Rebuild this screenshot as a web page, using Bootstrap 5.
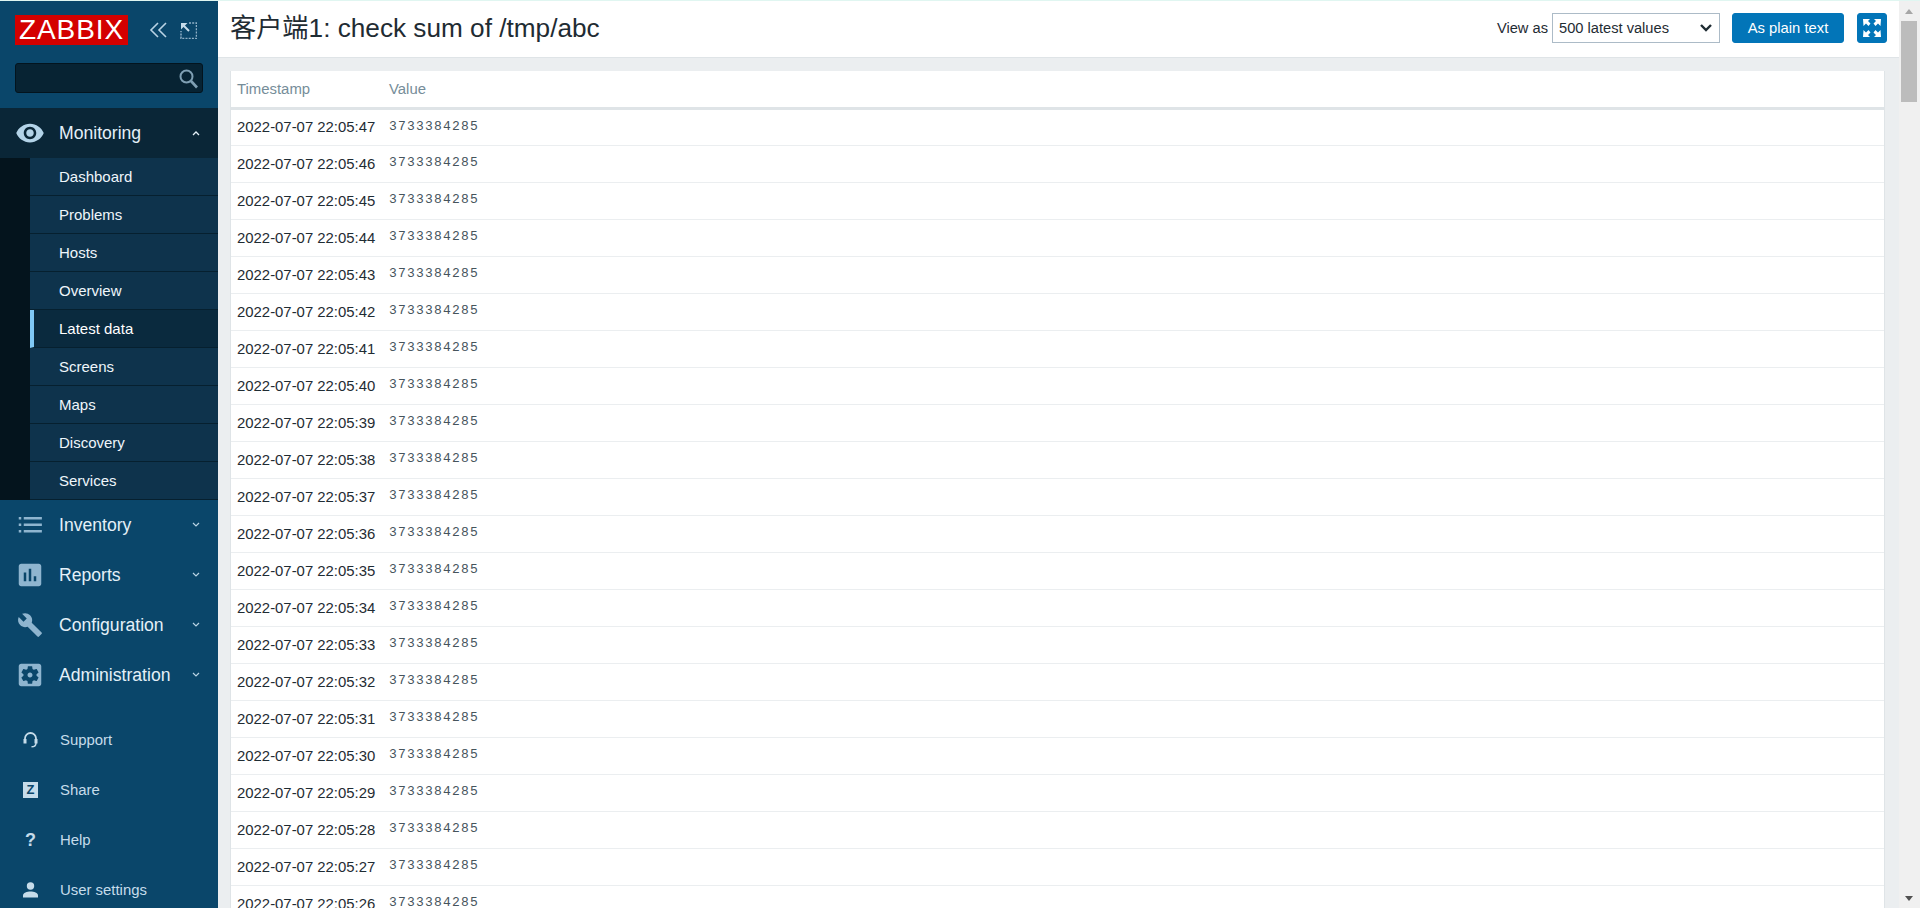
<!DOCTYPE html>
<html lang="en">
<head>
  <meta charset="UTF-8" />
  <meta name="viewport" content="width=device-width, initial-scale=1.0"/>
  <title>客户端1: check sum of /tmp/abc</title>
  <link href="https://cdn.jsdelivr.net/npm/bootstrap@5.3.0/dist/css/bootstrap.min.css" rel="stylesheet">
  <style>
    html, body { height: 100%; overflow: hidden; }
    body { font-family: "Liberation Sans", "Noto Sans CJK SC", sans-serif; font-size: 14.67px; color: #1f2c33; background: #ebeef0; }
    .app-shell { height: 100vh; border-top: 1px solid #e0f6f1; }
    /* sidebar */
    .side { width: 218px; flex: none; background: #0a466a; overflow: hidden; }
    .side > * { flex-shrink: 0; }
    .side-top { height: 107px; padding: 14px 15px 0; }
    .logo { width: 113px; height: 30px; background: #d40000; color: #fff; font-size: 28px; line-height: 30px; text-align: center; letter-spacing: .9px; }
    .side-btns { margin-left: 21px; gap: 12px; }
    .side-btns svg { display: block; }
    .side-search { height: 30px; width: 188px; margin-top: 18px; background: #072333; border: 1px solid #03141e; border-radius: 3px; }
    .side-search svg { position: absolute; right: 4px; top: 5px; }
    .mon-head { background: #0a2637; color: #f4f9fc; }
    .menu-row { height: 50px; font-size: 17.6px; color: #e4f0f8; padding-left: 15px; }
    .menu-row .mi { width: 30px; height: 30px; flex: none; margin-right: 14px; }
    .menu-row .mi-sm { width: 26px; height: 26px; margin-left: 2px; margin-right: 16px; }
    .menu-row .chev { margin-left: auto; margin-right: 18px; }
    .sub-wrap { padding-left: 30px; background: #04141d; }
    .sub-item { height: 38px; padding-left: 29px; font-size: 15px; background: #0e334c; border-bottom: 1px solid #06202f; color: #eef6fb; line-height: 38px; }
    .sub-item.on { background: #0a2a3e; border-left: 4px solid #7fc8f5; padding-left: 25px; color: #fff; }
    .foot-list { margin-top: 15px; }
    .foot-row { height: 50px; color: #c6dcea; padding-left: 23px; font-size: 14.9px; }
    .foot-row .fi { width: 15px; height: 16px; flex: none; margin-right: 22px; }
    .fi-z { background: #c6dcea; color: #0a466a; font-weight: 700; font-size: 13px; line-height: 16px; text-align: center; }
    .fi-q { color: #c6dcea; font-weight: 700; font-size: 18px; line-height: 16px; text-align: center; }
    /* main */
    .main-col { min-width: 0; }
    .page-head { height: 57px; flex: none; background: #fff; border-bottom: 1px solid #dfe4e7; padding: 0 12px 2px 12px; }
    .page-head h1 { font-size: 26.2px; font-weight: 400; margin: 2px 0 0; color: #1f2c33; }
    .view-sel { width: 168px; height: 30px; padding: 0 24px 0 6px; font-size: 14.67px; color: #1f2c33; border: 1px solid #acbbc7; border-radius: 0; background-position: right 6px center; background-size: 14px 10px; background-image: url("data:image/svg+xml,%3csvg xmlns='http://www.w3.org/2000/svg' viewBox='0 0 14 10'%3e%3cpath fill='none' stroke='%231f2c33' stroke-width='2.4' d='M2 2l5 5 5-5'/%3e%3c/svg%3e"); }
    .btn-plain { height: 30px; width: 112px; padding: 0; background: #0275b8; border-color: #0275b8; color: #fff; font-size: 14.8px; border-radius: 3px; margin-left: 12px; }
    .btn-full { height: 30px; width: 30px; padding: 0; background: #0275b8; border-color: #0275b8; border-radius: 3px; margin-left: 13px; }
    .content-area { padding: 13px 14px 0 12px; min-height: 0; overflow: hidden; }
    .data-box { background: #fff; border: 1px solid #dfe4e7; border-width: 0 1px; }
    .data-tbl { margin: 0; table-layout: fixed; font-size: 14.9px; --bs-table-color: #1f2c33; }
    .data-tbl th { height: 37px; padding: 0 6px; font-weight: 400; color: #768d99; border-bottom: 3px solid #dfe4e7; vertical-align: middle; }
    .data-tbl td { height: 37px; padding: 1px 6px 0; border-bottom: 1px solid #ebeef0; vertical-align: middle; }
    .data-tbl .ts-col { width: 152px; }
    .data-tbl td.val-cell { font-family: "Liberation Mono", monospace; font-size: 13px; letter-spacing: 1.2px; color: #46545c; padding: 0 6px 1px; }
    /* fake scrollbar of the window */
    .win-scroll { width: 21px; flex: none; background: #f0f0f0; }
    .win-thumb { position: absolute; left: 2px; right: 3px; top: 20px; height: 81px; background: #bcbcbc; }
    .arr-up, .arr-down { position: absolute; left: 6px; width: 0; height: 0; border-left: 4.5px solid transparent; border-right: 4.5px solid transparent; }
    .arr-up { top: 8px; border-bottom: 5px solid #a6a6a6; }
    .arr-down { bottom: 7px; border-top: 5px solid #505050; }
  </style>
</head>
<body>
  <div class="app-shell d-flex">
    <aside class="side d-flex flex-column">
      <div class="side-top">
        <div class="d-flex align-items-center">
          <div class="logo">ZABBIX</div>
          <div class="side-btns d-flex align-items-center">
            <svg width="19" height="16" viewBox="0 0 19 16" fill="none" stroke="#b9d3e4" stroke-width="1.6"><path d="M9 1 2 8l7 7M17 1l-7 7 7 7"/></svg>
            <svg width="17" height="17" viewBox="0 0 17 17" fill="none" stroke="#8fb0c6" stroke-width="1.5"><path d="M9 1h7.500v15.500H1V9" stroke-dasharray="2 1.200"/><path d="M1 1h6.500L1 7.500z" fill="#c6dcea" stroke="none"/><path d="m3 3 6 6" stroke="#c6dcea" stroke-width="2"/></svg>
          </div>
        </div>
        <div class="side-search position-relative">
          <svg width="19" height="20" viewBox="0 0 19 20" fill="none" stroke="#7f9fb3" stroke-width="2"><circle cx="7.500" cy="7.500" r="6"/><path d="m12 12 6 6.500" stroke-width="2.600"/></svg>
        </div>
      </div>

      <div class="menu-row mon-head d-flex align-items-center">
        <svg class="mi" viewBox="0 0 24 24" fill="#b3d3e8"><path d="M12 4.500C7 4.500 2.730 7.610 1 12c1.730 4.390 6 7.500 11 7.500s9.270-3.110 11-7.500c-1.730-4.390-6-7.500-11-7.500zM12 17c-2.760 0-5-2.240-5-5s2.240-5 5-5 5 2.240 5 5-2.240 5-5 5zm0-8c-1.660 0-3 1.340-3 3s1.340 3 3 3 3-1.340 3-3-1.340-3-3-3z"/></svg>
        <span>Monitoring</span>
        <svg class="chev" width="8" height="6" viewBox="0 0 8 6" fill="none" stroke="#e4f0f8" stroke-width="1.300"><path d="m1 5 3-3 3 3"/></svg>
      </div>
      <div class="sub-wrap">
        <div class="sub-item">Dashboard</div>
        <div class="sub-item">Problems</div>
        <div class="sub-item">Hosts</div>
        <div class="sub-item">Overview</div>
        <div class="sub-item on">Latest data</div>
        <div class="sub-item">Screens</div>
        <div class="sub-item">Maps</div>
        <div class="sub-item">Discovery</div>
        <div class="sub-item">Services</div>
      </div>

      <div class="menu-row d-flex align-items-center">
        <svg class="mi" viewBox="0 0 24 24" fill="#8fb5cf"><path d="M3 5.500h2v2H3zM3 10.800h2v2H3zM3 16h2v2H3zM7 5.500h14.500v2H7zM7 10.800h14.500v2H7zM7 16h14.500v2H7z"/></svg>
        <span>Inventory</span>
        <svg class="chev" width="8" height="6" viewBox="0 0 8 6" fill="none" stroke="#b9d3e4" stroke-width="1.200"><path d="m1 1 3 3 3-3"/></svg>
      </div>
      <div class="menu-row d-flex align-items-center">
        <svg class="mi" viewBox="0 0 24 24" fill="#8fb5cf"><path d="M19 3H5c-1.100 0-2 .9-2 2v14c0 1.100.9 2 2 2h14c1.100 0 2-.9 2-2V5c0-1.100-.9-2-2-2zM9 17H7v-7h2v7zm4 0h-2V7h2v10zm4 0h-2v-4h2v4z"/></svg>
        <span>Reports</span>
        <svg class="chev" width="8" height="6" viewBox="0 0 8 6" fill="none" stroke="#b9d3e4" stroke-width="1.200"><path d="m1 1 3 3 3-3"/></svg>
      </div>
      <div class="menu-row d-flex align-items-center">
        <svg class="mi mi-sm" viewBox="0 0 24 24" fill="#8fb5cf"><path d="M22.700 19l-9.100-9.100c.9-2.300.4-5-1.500-6.900-2-2-5-2.400-7.400-1.300L9 6 6 9 1.600 4.700C.4 7.100.9 10.100 2.900 12.100c1.900 1.900 4.600 2.400 6.900 1.500l9.100 9.100c.4.4 1 .4 1.400 0l2.300-2.300c.5-.4.5-1.100.1-1.400z"/></svg>
        <span>Configuration</span>
        <svg class="chev" width="8" height="6" viewBox="0 0 8 6" fill="none" stroke="#b9d3e4" stroke-width="1.200"><path d="m1 1 3 3 3-3"/></svg>
      </div>
      <div class="menu-row d-flex align-items-center">
        <svg class="mi" viewBox="0 0 24 24" fill="#8fb5cf"><path d="M12 10c-1.100 0-2 .9-2 2s.9 2 2 2 2-.9 2-2-.9-2-2-2zm7-7H5c-1.110 0-2 .9-2 2v14c0 1.100.89 2 2 2h14c1.110 0 2-.9 2-2V5c0-1.100-.89-2-2-2zm-1.750 9c0 .23-.02.46-.05.68l1.480 1.160c.13.11.17.3.08.45l-1.400 2.420c-.09.15-.27.21-.43.15l-1.740-.7c-.36.28-.76.51-1.180.69l-.26 1.850c-.03.17-.18.3-.35.3h-2.800c-.17 0-.32-.13-.35-.29l-.26-1.850c-.43-.18-.82-.41-1.180-.69l-1.740.7c-.16.06-.34 0-.43-.15l-1.400-2.420c-.09-.15-.05-.34.08-.45l1.480-1.160c-.03-.23-.05-.46-.05-.69 0-.23.02-.46.05-.68l-1.480-1.160c-.13-.11-.17-.3-.08-.45l1.400-2.420c.09-.15.27-.21.43-.15l1.740.7c.36-.28.76-.51 1.180-.69l.26-1.850c.03-.17.18-.3.35-.3h2.800c.17 0 .32.13.35.29l.26 1.850c.43.18.82.41 1.180.69l1.740-.7c.16-.06.34 0 .43.15l1.400 2.420c.09.15.05.34-.08.45l-1.480 1.160c.03.23.05.46.05.69z"/></svg>
        <span>Administration</span>
        <svg class="chev" width="8" height="6" viewBox="0 0 8 6" fill="none" stroke="#b9d3e4" stroke-width="1.200"><path d="m1 1 3 3 3-3"/></svg>
      </div>

      <div class="foot-list">
        <div class="foot-row d-flex align-items-center">
          <svg class="fi" viewBox="0 0 15 16" fill="none" stroke="#c6dcea" stroke-width="1.800"><path d="M2 9V6.500a5.500 5.500 0 0 1 11 0V9"/><path d="M2 7v4.500M13 7v4.500" stroke-width="3"/><path d="M13 11c0 2.500-2 3.800-4.500 3.800" stroke-width="1.400"/></svg>
          <span>Support</span>
        </div>
        <div class="foot-row d-flex align-items-center">
          <div class="fi fi-z">Z</div>
          <span>Share</span>
        </div>
        <div class="foot-row d-flex align-items-center">
          <div class="fi fi-q">?</div>
          <span>Help</span>
        </div>
        <div class="foot-row d-flex align-items-center">
          <svg class="fi" viewBox="0 0 15 16" fill="#c6dcea"><circle cx="7.500" cy="4" r="3.700"/><path d="M0 15.500v-2c0-2.800 4-4 7.500-4s7.500 1.200 7.500 4v2z"/></svg>
          <span>User settings</span>
        </div>
      </div>
    </aside>

    <div class="main-col flex-grow-1 d-flex flex-column">
      <header class="page-head d-flex align-items-center justify-content-between">
        <h1>客户端1: check sum of /tmp/abc</h1>
        <div class="d-flex align-items-center">
          <label class="me-1" for="viewSel">View as</label>
          <select id="viewSel" class="form-select view-sel">
            <option>500 latest values</option>
          </select>
          <button type="button" class="btn btn-primary btn-plain">As plain text</button>
          <button type="button" class="btn btn-primary btn-full d-flex align-items-center justify-content-center" title="Fullscreen">
            <svg width="20" height="20" viewBox="0 0 20 20" fill="#fff"><path d="M1 1h7L6 3l2.500 2.500-2 2.500L4 5.500 1.500 8zM19 1h-7l2 2-2.500 2.500 2 2.500L16 5.500 18.500 8zM1 19h7l-2-2 2.500-2.500-2-2.500L4 14.500 1.500 12zM19 19h-7l2-2-2.500-2.500 2-2.500 2.500 2.500 2.500-2.500z"/></svg>
          </button>
        </div>
      </header>
      <main class="content-area flex-grow-1">
        <div class="data-box">
          <table class="table data-tbl">
            <thead>
              <tr><th class="ts-col">Timestamp</th><th>Value</th></tr>
            </thead>
            <tbody id="historyRows">
              <!-- JS will populate -->
            </tbody>
          </table>
        </div>
      </main>
    </div>

    <div class="win-scroll position-relative">
      <div class="arr-up"></div>
      <div class="win-thumb"></div>
      <div class="arr-down"></div>
    </div>
  </div>
  <script src="https://cdn.jsdelivr.net/npm/bootstrap@5.3.0/dist/js/bootstrap.bundle.min.js"></script>
  <script>
    const historyRows = document.getElementById("historyRows");
    for (let sec = 47; sec >= 26; sec--) {
      const row = document.createElement("tr");
      row.innerHTML = `<td>2022-07-07 22:05:${sec}</td><td class="val-cell">3733384285</td>`;
      historyRows.appendChild(row);
    }
  </script>
</body>
</html>
